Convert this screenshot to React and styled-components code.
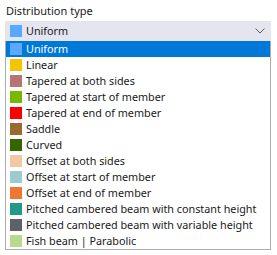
import React from "react";
import styled, { createGlobalStyle } from "styled-components";

const Global = createGlobalStyle`
  html, body { margin: 0; padding: 0; background: #ffffff; }
  body { font-family: "Noto Sans", "Open Sans", sans-serif; font-size: 10.8px; color: #1a1a1a; }
`;

const Page = styled.div`
  width: 277px;
  height: 255px;
  padding: 0 6px 0 5px;
  box-sizing: border-box;
  overflow: hidden;
`;

const Label = styled.div`
  height: 21px;
  line-height: 21px;
  padding-left: 1px;
  box-sizing: border-box;
  font-size: 11px;
  color: #1a1a1a;
`;

const Combo = styled.div`
  display: flex;
  flex-direction: column;
`;

const Header = styled.div`
  height: 20px;
  background: #e5e5ef;
  display: flex;
  align-items: center;
  padding-left: 5px;
  padding-right: 6px;
  gap: 4px;
`;

const Swatch = styled.span`
  width: 12px;
  height: 12px;
  flex: none;
  background: ${(p) => p.$color};
`;

const Text = styled.span`
  flex: 1;
  white-space: nowrap;
  line-height: 16px;
`;

const List = styled.ul`
  list-style: none;
  margin: 0;
  padding: 0;
  border: 1px solid #acacac;
  border-top: none;
`;

const Row = styled.li`
  height: 16px;
  display: flex;
  align-items: center;
  gap: 4px;
  padding-left: 4px;
  background: ${(p) => (p.$selected ? "#0078d7" : "transparent")};
  color: ${(p) => (p.$selected ? "#ffffff" : "#1a1a1a")};
`;

const Chevron = () => (
  <svg width="10" height="6" viewBox="0 0 10 6" fill="none">
    <path d="M0.5 0.5 L5 5 L9.5 0.5" stroke="#5a5a5a" strokeWidth="1" />
  </svg>
);

const items = [
  ["Uniform", "#5aa9ff"],
  ["Linear", "#f6c300"],
  ["Tapered at both sides", "#b87474"],
  ["Tapered at start of member", "#77b800"],
  ["Tapered at end of member", "#ff0000"],
  ["Saddle", "#9a6a2e"],
  ["Curved", "#336600"],
  ["Offset at both sides", "#f0c8a2"],
  ["Offset at start of member", "#9acccc"],
  ["Offset at end of member", "#ee7733"],
  ["Pitched cambered beam with constant height", "#229988"],
  ["Pitched cambered beam with variable height", "#5f6068"],
  ["Fish beam | Parabolic", "#b6d98a"],
];

export default function App() {
  return (
    <Page>
      <Global />
      <Label>Distribution type</Label>
      <Combo>
        <Header>
          <Swatch $color="#5aa9ff" />
          <Text>Uniform</Text>
          <Chevron />
        </Header>
        <List>
          {items.map(([name, color], i) => (
            <Row key={name} $selected={i === 0}>
              <Swatch $color={color} />
              <Text>{name}</Text>
            </Row>
          ))}
        </List>
      </Combo>
    </Page>
  );
}
